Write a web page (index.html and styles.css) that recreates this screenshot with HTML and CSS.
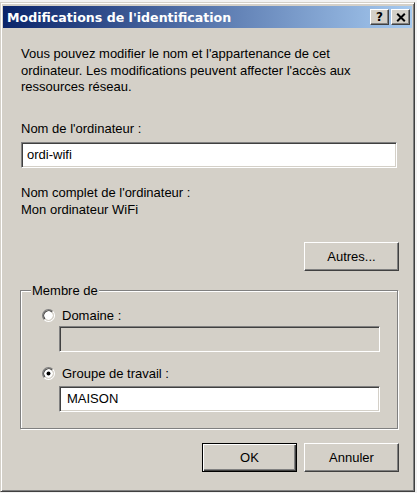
FILE: index.html
```html
<!DOCTYPE html>
<html lang="fr">
<head>
<meta charset="utf-8">
<title>Modifications de l'identification</title>
<link rel="stylesheet" href="styles.css">
</head>
<body>
<div class="window">
  <div class="titlebar">
    <span class="title">Modifications de l'identification</span>
    <div class="tbtns">
      <span class="tbtn help">?</span>
      <span class="tbtn close">
        <svg width="10" height="9" viewBox="0 0 10 9"><path d="M1.2 0.8 L8.8 8.2 M8.8 0.8 L1.2 8.2" stroke="#000" stroke-width="2" fill="none"/></svg>
      </span>
    </div>
  </div>
  <div class="content">
    <p class="intro">Vous pouvez modifier le nom et l'appartenance de cet<br>ordinateur. Les modifications peuvent affecter l'accès aux<br>ressources réseau.</p>
    <div class="lbl">Nom de l'ordinateur :</div>
    <div class="field">ordi-wifi</div>
    <div class="fullname">
      <div>Nom complet de l'ordinateur :</div>
      <div>Mon ordinateur WiFi</div>
    </div>
    <div class="row-right"><span class="btn">Autres...</span></div>
    <fieldset class="group">
      <legend>Membre de</legend>
      <div class="group-inner">
        <div class="radio-row">
          <svg class="radio" width="13" height="13" viewBox="0 0 12 12">
            <circle cx="6" cy="6" r="4.2" fill="#fff"/>
            <path d="M2.11 9.89 A5.5 5.5 0 0 1 9.89 2.11" stroke="#808080" fill="none"/>
            <path d="M9.89 2.11 A5.5 5.5 0 0 1 2.11 9.89" stroke="#fff" fill="none"/>
            <path d="M2.82 9.18 A4.5 4.5 0 0 1 9.18 2.82" stroke="#404040" fill="none"/>
            <path d="M9.18 2.82 A4.5 4.5 0 0 1 2.82 9.18" stroke="#d4d0c8" fill="none"/>
          </svg>
          <span>Domaine :</span>
        </div>
        <div class="field sub disabled"></div>
        <div class="radio-row gap">
          <svg class="radio" width="13" height="13" viewBox="0 0 12 12">
            <circle cx="6" cy="6" r="4.2" fill="#fff"/>
            <path d="M2.11 9.89 A5.5 5.5 0 0 1 9.89 2.11" stroke="#808080" fill="none"/>
            <path d="M9.89 2.11 A5.5 5.5 0 0 1 2.11 9.89" stroke="#fff" fill="none"/>
            <path d="M2.82 9.18 A4.5 4.5 0 0 1 9.18 2.82" stroke="#404040" fill="none"/>
            <path d="M9.18 2.82 A4.5 4.5 0 0 1 2.82 9.18" stroke="#d4d0c8" fill="none"/>
            <circle cx="6" cy="6" r="1.8" fill="#000"/>
          </svg>
          <span>Groupe de travail :</span>
        </div>
        <div class="field sub second">MAISON</div>
      </div>
    </fieldset>
    <div class="actions">
      <span class="btn default">OK</span>
      <span class="btn">Annuler</span>
    </div>
  </div>
</div>
</body>
</html>
```

FILE: styles.css
```css
html, body {
  margin: 0;
  padding: 0;
}
body {
  background: #f2f2f2;
  padding-top: 2px;
  font-family: "Liberation Sans", Arial, sans-serif;
  font-size: 13px;
  color: #000;
}
.window {
  box-sizing: border-box;
  width: 415px;
  height: 490px;
  background: #d4d0c8;
  border: 1px solid;
  border-color: #d4d0c8 #404040 #404040 #d4d0c8;
  box-shadow: inset 1px 1px 0 #fff, inset -1px -1px 0 #808080;
  padding: 3px 2px 2px 2px;
  display: flex;
  flex-direction: column;
}
.titlebar {
  height: 22px;
  background: linear-gradient(to right, #0a246a, #a6caf0);
  display: flex;
  align-items: center;
  justify-content: space-between;
  padding: 0 2px 0 4px;
}
.title {
  color: #fff;
  font-family: "DejaVu Sans", Verdana, sans-serif;
  font-weight: bold;
  font-size: 12.6px;
}
.tbtns {
  display: flex;
  gap: 2px;
}
.tbtn {
  box-sizing: border-box;
  width: 19px;
  height: 16px;
  background: #d4d0c8;
  border: 1px solid;
  border-color: #fff #404040 #404040 #fff;
  box-shadow: inset -1px -1px 0 #808080;
  display: flex;
  align-items: center;
  justify-content: center;
}
.help {
  font-family: "DejaVu Sans", sans-serif;
  font-weight: bold;
  font-size: 12px;
  line-height: 1;
}
.content {
  flex: 1;
  padding: 18px 13px 0 18px;
  display: flex;
  flex-direction: column;
}
.intro {
  margin: 0;
  line-height: 16.5px;
}
.lbl {
  margin-top: 25px;
  line-height: 16px;
}
.field {
  box-sizing: border-box;
  height: 26px;
  margin: 5px 2px 0 0;
  background: #fff;
  border: 1px solid;
  border-color: #808080 #fff #fff #808080;
  box-shadow: inset 1px 1px 0 #404040, inset -1px -1px 0 #d4d0c8;
  padding: 0 5px;
  line-height: 24px;
}
.fullname {
  margin-top: 16px;
  line-height: 17px;
}
.row-right {
  display: flex;
  justify-content: flex-end;
  margin-top: 24px;
}
.btn {
  box-sizing: border-box;
  width: 95px;
  height: 29px;
  background: #d4d0c8;
  border: 1px solid;
  border-color: #fff #404040 #404040 #fff;
  box-shadow: inset -1px -1px 0 #808080, inset 1px 1px 0 #d4d0c8;
  display: flex;
  align-items: center;
  justify-content: center;
}
.btn.default {
  border-color: #000;
  box-shadow: inset 1px 1px 0 #fff, inset -1px -1px 0 #404040, inset -2px -2px 0 #808080;
}
.group {
  margin: 12px 1px 0 -1px;
  padding: 0 17px 16px 10px;
  border: 1px solid #808080;
  box-shadow: 1px 1px 0 #fff, inset 1px 1px 0 #fff;
  min-width: 0;
}
.group legend {
  padding: 0 1px;
  line-height: 16px;
  background: #d4d0c8;
}
.group-inner {
  margin: 9px 0 0 11px;
}
.radio-row {
  display: flex;
  align-items: center;
  gap: 7px;
  height: 16px;
}
.radio-row.gap {
  margin-top: 14px;
}
.field.sub {
  margin: 2px 0 0 17px;
}
.field.sub.second {
  margin-top: 4px;
  padding-left: 7px;
}
.field.disabled {
  background: #d4d0c8;
}
.actions {
  display: flex;
  justify-content: flex-end;
  gap: 7px;
  margin-top: 14px;
}
```
